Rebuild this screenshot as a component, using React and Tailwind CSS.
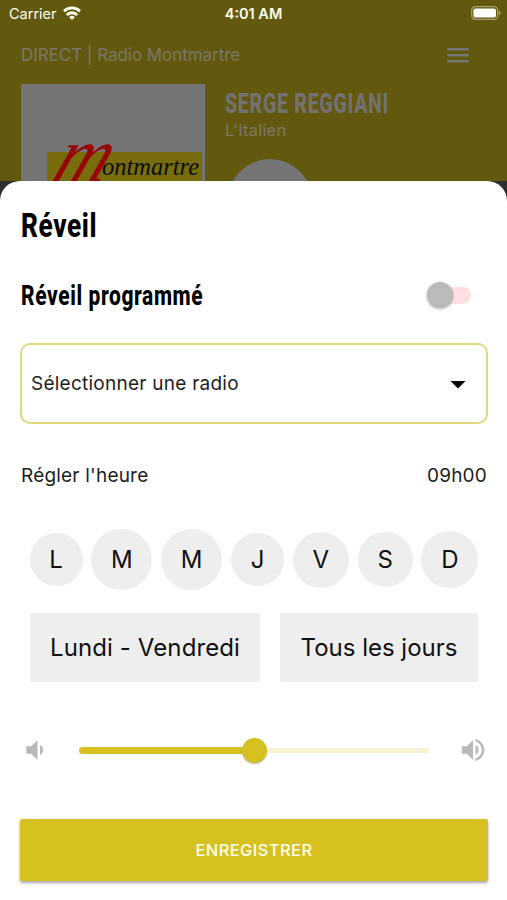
import { MdArrowDropDown, MdVolumeDown, MdVolumeUp } from "react-icons/md"
import { useState } from "react"

const days = [
  { key: "mon", label: "L", size: "size-[53px]" },
  { key: "tue", label: "M", size: "size-[61px]" },
  { key: "wed", label: "M", size: "size-[61px]" },
  { key: "thu", label: "J", size: "size-[53px]" },
  { key: "fri", label: "V", size: "size-[56px]" },
  { key: "sat", label: "S", size: "size-[55px]" },
  { key: "sun", label: "D", size: "size-[57px]" },
]

function StatusBar() {
  return (
    <div className="grid h-7 grid-cols-3 items-center pl-[9px] pr-[6px] text-[14.5px] text-[#fffff0]">
      <div className="flex items-center gap-[6px]">
        <span>Carrier</span>
        <svg viewBox="0 0 18 14" className="-mt-[3px] h-[14px] w-[18px]" fill="none" stroke="currentColor" strokeWidth="2.8">
          <path d="M1 5.2a11.4 11.4 0 0 1 16 0" />
          <path d="M3.8 8.9a7.4 7.4 0 0 1 10.4 0" />
          <path d="M9 14 6.2 11.2a4 4 0 0 1 5.6 0Z" fill="currentColor" stroke="none" />
        </svg>
      </div>
      <span className="-ml-[3px] text-center text-[14.5px] font-semibold whitespace-nowrap">4:01 AM</span>
      <svg viewBox="0 0 30 14" className="-mt-[2px] h-[14px] w-[30px] justify-self-end">
        <rect x="0.7" y="0.7" width="26" height="12.6" rx="3.6" fill="none" stroke="#a7a16e" strokeWidth="1.2" />
        <rect x="2.4" y="2.4" width="22.6" height="9.2" rx="2.2" fill="#fff" />
        <path d="M28 4.8c2 .7 2 3.7 0 4.4Z" fill="#a7a16e" />
      </svg>
    </div>
  )
}

function Cover() {
  return (
    <svg viewBox="0 0 184 97" className="h-[97px] w-[184px] shrink-0 bg-[#757575]">
      <rect x="26" y="68" width="155" height="29" fill="#776d0c" />
      <text
        x="0"
        y="0"
        transform="translate(29 97) skewX(-22)"
        fontSize="78"
        fill="#960606"
        fontFamily="Liberation Serif, serif"
        fontStyle="italic"
        textLength="53"
        lengthAdjust="spacingAndGlyphs"
      >
        m
      </text>
      <text
        x="81"
        y="91"
        fontSize="26"
        fill="#0c0b04"
        fontFamily="Liberation Serif, serif"
        fontStyle="italic"
        textLength="97"
        lengthAdjust="spacingAndGlyphs"
      >
        ontmartre
      </text>
    </svg>
  )
}

function Player() {
  return (
    <div className="h-[181px] overflow-hidden bg-[#62590f] text-[#7c7667]">
      <StatusBar />
      <div className="flex h-14 items-start justify-between pt-[11.5px] pl-[21px] pr-[38px]">
        <span className="text-[17px]/[30px] tracking-[-0.05px]">DIRECT | Radio Montmartre</span>
        <svg viewBox="0 0 22 30" className="h-[30px] w-[22px]" stroke="#757575" strokeWidth="2.6" strokeLinecap="round">
          <path d="M1.3 9.2h19.4M1.3 15.2h19.4M1.3 21.2h19.4" />
        </svg>
      </div>
      <div className="flex gap-5 pl-[21px]">
        <Cover />
        <div>
          <p className="h-[36px] origin-left scale-x-[0.7] font-[Roboto] text-[28px]/[39px] font-extrabold tracking-[1px] whitespace-nowrap text-[#757171]">
            SERGE REGGIANI
          </p>
          <p className="text-[16.5px]/[20px] tracking-[0.2px]">L'Italien</p>
          <div className="mt-[19px] ml-[3px] size-[84px] rounded-full bg-[#757575]" />
        </div>
      </div>
    </div>
  )
}

function AlarmSwitch({ on, onToggle }) {
  return (
    <button role="switch" aria-checked={on} aria-label="Réveil programmé" onClick={onToggle} className="flex items-center">
      <span className="size-[26px] rounded-full bg-[#bababa] shadow-[0_1px_3px_rgba(0,0,0,0.3)]" />
      <span className="-z-10 -ml-[20px] h-[17px] w-[38px] rounded-full bg-[#ffdfe2]" />
    </button>
  )
}

function VolumeSlider({ value }) {
  return (
    <div className="-ml-px flex items-center">
      <MdVolumeDown size={30} className="shrink-0 text-[#b9b9b9]" />
      <div className="ml-[29px] flex w-[350px] shrink-0 items-center">
        <div className="h-[7px] rounded-l-full bg-[#d6c120]" style={{ width: `calc(${value}% - 12px)` }} />
        <div className="size-[25px] shrink-0 rounded-full bg-[#d6c120] shadow-[0_1px_2px_rgba(0,0,0,0.3)]" />
        <div className="h-[5px] flex-1 rounded-r-full bg-[#f7f2d1]" />
      </div>
      <MdVolumeUp size={30} className="ml-[29px] shrink-0 text-[#b9b9b9]" />
    </div>
  )
}

export default function App() {
  const [enabled, setEnabled] = useState(false)

  return (
    <div className="h-[900px] w-[507px] overflow-hidden bg-[#302e31] font-[Inter,sans-serif]">
      <Player />

      {/* Alarm sheet */}
      <div className="isolate h-[719px] rounded-t-[20px] bg-white px-[21px] pt-[22px] text-[#1d1d1d]">
        <h1 className="h-[44px] w-max origin-left scale-x-[0.77] font-[Roboto] text-[34px]/[45px] font-extrabold tracking-[0.8px] text-black">
          Réveil
        </h1>

        <div className="mt-[30px] flex h-9 items-center justify-between pr-[15px]">
          <h2 className="w-[220px] origin-left scale-x-[0.775] pt-[2px] font-[Roboto] text-[27px]/[38px] font-extrabold tracking-[0.8px] whitespace-nowrap text-black">
            Réveil programmé
          </h2>
          <AlarmSwitch on={enabled} onToggle={() => setEnabled(!enabled)} />
        </div>

        <button className="mt-[30px] -ml-px flex h-[81px] w-[468px] items-center justify-between rounded-[10px] border-2 border-[#e3d77e] pr-[10px] pl-[9px] text-[19px] tracking-[0.25px]">
          <span className="pt-[2px]">Sélectionner une radio</span>
          <MdArrowDropDown size={36} className="text-black" />
        </button>

        <div className="mt-[39px] -mr-px flex h-[26px] items-center justify-between text-[19px] tracking-[0.2px]">
          <span>Régler l'heure</span>
          <span>09h00</span>
        </div>

        <div className="mt-[40px] flex h-[61px] items-center justify-between pr-[7.5px] pl-[8.5px] text-[24px] text-[#111]">
          {days.map((day) => (
            <button key={day.key} className={`flex items-center justify-center rounded-full bg-[#eee] pt-px ${day.size}`}>
              {day.label}
            </button>
          ))}
        </div>

        <div className="mt-[23px] flex gap-5 pl-[9px] text-[24px] text-[#111]">
          <button className="h-[69px] w-[230px] rounded-xs bg-[#eee] tracking-[0.1px] whitespace-nowrap">Lundi - Vendredi</button>
          <button className="h-[69px] w-[198px] rounded-xs bg-[#eee] whitespace-nowrap">Tous les jours</button>
        </div>

        <div className="mt-[53px]">
          <VolumeSlider value={50} />
        </div>

        <button className="mt-[54px] -ml-px h-[62px] w-[468px] rounded-xs bg-[#d6c120] text-[16.5px] font-medium tracking-[0.4px] text-[#fffff0] shadow-[0_2px_3px_rgba(0,0,0,0.35)]">
          ENREGISTRER
        </button>
      </div>
    </div>
  )
}
